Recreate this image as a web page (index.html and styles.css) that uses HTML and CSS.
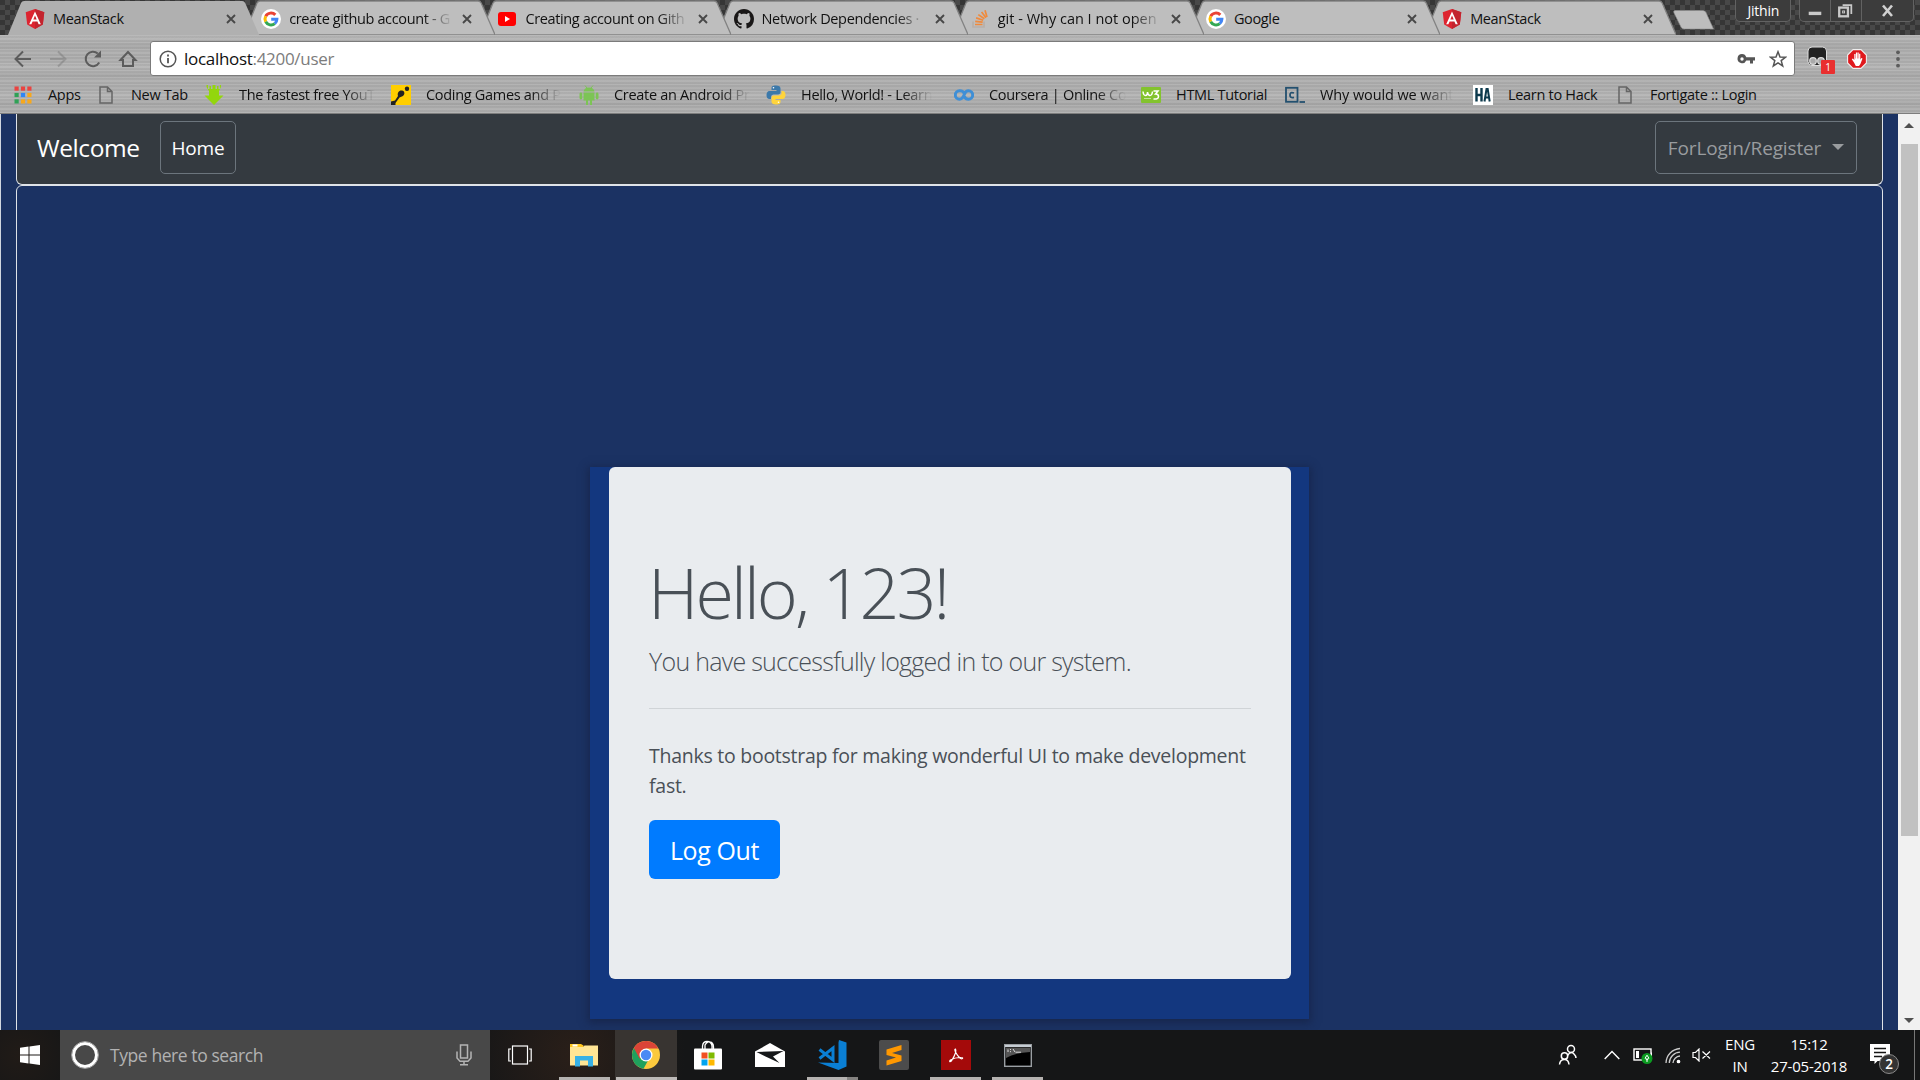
FILE: index.html
```html
<!DOCTYPE html>
<html lang="en">
<head>
<meta charset="utf-8">
<title>MeanStack</title>
<link rel="stylesheet" href="styles.css">
</head>
<body>
<svg class="defs" aria-hidden="true">
  <symbol id="tab" viewBox="0 0 251 35" preserveAspectRatio="none"><path d="M0 35 L13 3 Q14 1 16 1 H234 Q236 1 237 3 L251 35 Z"/></symbol>
  <symbol id="close" viewBox="0 0 10 10"><path d="M1 1 L9 9 M9 1 L1 9" stroke="#484848" stroke-width="1.9" fill="none"/></symbol>
  <symbol id="angular" viewBox="0 0 20 20"><path d="M10 0 L19.3 3.3 L17.8 15.6 L10 20 L2.200 15.600 L.7 3.300Z" fill="#dd2430"/><path d="M10 0 L19.300 3.300 L17.800 15.600 L10 20Z" fill="#c3242e"/><path d="M10 2.400 L4.200 15.300 H6.400 L7.600 12.400 H12.400 L13.600 15.300 H15.800Z M10 6.500 L11.700 10.600 H8.300Z" fill="#fff" fill-rule="evenodd"/></symbol>
  <symbol id="google" viewBox="0 0 20 20"><circle cx="10" cy="10" r="10" fill="#fff"/><g fill="none" stroke-width="3"><path d="M14.300 5.900 A6 6 0 0 0 4.700 7.200" stroke="#ea4335"/><path d="M4.700 7.200 A6 6 0 0 0 4.700 12.800" stroke="#fbbc05"/><path d="M4.700 12.800 A6 6 0 0 0 13.800 14.600" stroke="#34a853"/><path d="M13.800 14.600 A6 6 0 0 0 15.900 10.200 H10.200" stroke="#4285f4"/></g></symbol>
  <symbol id="page" viewBox="0 0 14 18"><path d="M1 1 H8.500 L13 5.500 V17 H1Z M8.500 1 V5.500 H13" fill="none" stroke="#666" stroke-width="1.500"/></symbol>
</svg>

<header class="browser">
  <div class="titlebar">
    <div class="tab active">
      <svg class="shape"><use href="#tab"/></svg>
      <svg class="fav"><use href="#angular"/></svg><span class="tab-title">MeanStack</span><svg class="x"><use href="#close"/></svg>
    </div>
    <div class="tab t2">
      <svg class="shape"><use href="#tab"/></svg>
      <svg class="fav"><use href="#google"/></svg><span class="tab-title fade">create github account - G</span><svg class="x"><use href="#close"/></svg>
    </div>
    <div class="tab t3">
      <svg class="shape"><use href="#tab"/></svg>
      <svg class="fav" viewBox="0 0 20 20"><rect x="1" y="3" width="18" height="14" rx="3" fill="#f00"/><path d="M8 7 L13 10 L8 13Z" fill="#fff"/></svg><span class="tab-title fade">Creating account on Gith</span><svg class="x"><use href="#close"/></svg>
    </div>
    <div class="tab t4">
      <svg class="shape"><use href="#tab"/></svg>
      <svg class="fav" viewBox="0 0 16 16"><path fill="#191717" d="M8 0C3.580 0 0 3.580 0 8c0 3.540 2.290 6.530 5.470 7.590.4.070.55-.17.55-.38 0-.19-.01-.82-.01-1.490-2.010.37-2.530-.49-2.690-.94-.09-.23-.48-.94-.82-1.130-.28-.15-.68-.52-.01-.53.63-.01 1.080.58 1.230.82.72 1.210 1.870.87 2.330.66.07-.52.28-.87.51-1.070-1.780-.2-3.640-.89-3.640-3.950 0-.87.31-1.590.82-2.150-.08-.2-.36-1.020.08-2.120 0 0 .67-.21 2.200.82.64-.18 1.320-.27 2-.27s1.360.09 2 .27c1.530-1.040 2.200-.82 2.200-.82.44 1.100.16 1.920.08 2.120.51.56.82 1.270.82 2.150 0 3.070-1.870 3.750-3.650 3.950.29.25.54.73.54 1.480 0 1.070-.01 1.930-.01 2.200 0 .21.15.46.55.38A8.010 8.010 0 0 0 16 8c0-4.420-3.580-8-8-8z"/></svg><span class="tab-title fade">Network Dependencies ·</span><svg class="x"><use href="#close"/></svg>
    </div>
    <div class="tab t5">
      <svg class="shape"><use href="#tab"/></svg>
      <svg class="fav" viewBox="0 0 20 20" fill="none" stroke-width="1.700"><path d="M3 12.500 V18 H14 V12.500" stroke="#b8b0aa"/><path d="M5 15.500 H12.500 M5.200 12.300 L12.700 13.200 M6.100 8.900 L13.200 11.200 M8.300 5.600 L14.400 9.800 M11.600 3 L16 8.800 M15 1.200 L17 8" stroke="#f08a3c"/></svg><span class="tab-title fade wider">git - Why can I not open</span><svg class="x"><use href="#close"/></svg>
    </div>
    <div class="tab t6">
      <svg class="shape"><use href="#tab"/></svg>
      <svg class="fav"><use href="#google"/></svg><span class="tab-title">Google</span><svg class="x"><use href="#close"/></svg>
    </div>
    <div class="tab t7">
      <svg class="shape"><use href="#tab"/></svg>
      <svg class="fav"><use href="#angular"/></svg><span class="tab-title">MeanStack</span><svg class="x"><use href="#close"/></svg>
    </div>
    <svg class="newtab" viewBox="0 0 42 20"><path d="M2 .5 H30 Q32 .5 33 2.500 L40.500 19 H11 Q9 19 8 17 L1 3 Q0 .5 2 .5Z" fill="#bdbdbd" stroke="#8d8d8d" stroke-width=".6"/></svg>
    <span class="profile">Jithin</span>
    <div class="winbtns">
      <svg class="wb" viewBox="0 0 31 21"><path d="M9 13.500 H22" stroke="#c9c9c9" stroke-width="3.500"/></svg>
      <svg class="wb" viewBox="0 0 31 21" fill="none" stroke="#c9c9c9"><path d="M12 5 H21 V14" stroke-width="1.800"/><rect x="8.500" y="7.500" width="9" height="9" stroke-width="2.400"/><rect x="12" y="11" width="2" height="2" stroke-width="1"/></svg>
      <svg class="wb wide" viewBox="0 0 51 21"><path d="M21 5.500 L30 16 M30 5.500 L21 16" stroke="#d0d0d0" stroke-width="2.600"/></svg>
    </div>
  </div>

  <div class="toolbar">
    <svg class="nav" viewBox="0 0 20 20"><path d="M18 10 H3 M10 2.500 L2.500 10 L10 17.500" /></svg>
    <svg class="nav off" viewBox="0 0 20 20"><path d="M2 10 H17 M10 2.500 L17.500 10 L10 17.500"/></svg>
    <svg class="nav" viewBox="0 0 20 20"><path d="M16.200 13.500 A7.200 7.200 0 1 1 14.800 4.600"/><path d="M18 1.500 V8.500 H11Z" fill="#5c5c5c" stroke="none"/></svg>
    <svg class="nav" viewBox="0 0 20 20"><path d="M2.500 11 L10 3 L17.500 11 H15 V17 H5 V11Z"/></svg>
    <div class="omnibox">
      <svg class="info" viewBox="0 0 18 18"><circle cx="9" cy="9" r="7.800" fill="none" stroke="#555" stroke-width="1.500"/><path d="M9 8 V13.200 M9 4.600 V6.400" stroke="#555" stroke-width="1.800"/></svg>
      <span class="url">localhost<span class="path">:4200/user</span></span>
      <svg class="key" viewBox="0 0 18 12"><path d="M5 1 A4.600 4.600 0 1 0 9.300 7.500 H13 V10.500 H16 V7.500 H18 V4.300 H9.300 A4.600 4.600 0 0 0 5 1Z M5 4.300 A1.700 1.700 0 1 1 5 7.700 A1.700 1.700 0 1 1 5 4.300Z" fill="#555" fill-rule="evenodd"/></svg>
      <svg class="star" viewBox="0 0 18 18"><path d="M9 1.800 L11 7 L16.600 7.200 L12.200 10.600 L13.700 16 L9 12.900 L4.300 16 L5.800 10.600 L1.400 7.200 L7 7Z" fill="none" stroke="#555" stroke-width="1.500"/></svg>
    </div>
    <svg class="ext" viewBox="0 0 28 30"><rect x="1" y="1" width="18.500" height="18.500" rx="4" fill="#222" stroke="#ddd"/><circle cx="6" cy="15" r="3.300" fill="#aaa" stroke="#ddd" stroke-width="1.200"/><circle cx="14" cy="15" r="3.300" fill="#aaa" stroke="#ddd" stroke-width="1.200"/><rect x="14" y="14" width="14" height="14" rx="1" fill="#e92f2f"/><text class="extnum" x="21" y="25" text-anchor="middle">1</text></svg>
    <svg class="adb" viewBox="0 0 20 20"><path d="M6 .6 H14 L19.400 6 V14 L14 19.400 H6 L.6 14 V6Z" fill="#e0181c" stroke="#eee" stroke-width="1.100"/><path d="M7 13.500 L4.800 10.300 L5.900 9.600 L7.300 11 V5 H8.500 V9.500 H8.900 V3.600 H10.100 V9.500 H10.500 V3.600 H11.700 V9.500 H12.100 V4.800 H13.300 V10.800 L14.300 9 L15.500 9.400 L13.400 15 L12 17 H8.800Z" fill="#fff"/></svg>
    <svg class="menu" viewBox="0 0 4 18"><circle cx="2" cy="2.300" r="1.900"/><circle cx="2" cy="9" r="1.900"/><circle cx="2" cy="15.700" r="1.900"/></svg>
  </div>

  <div class="bookmarks">
    <a class="bm"><svg class="bi" viewBox="0 0 20 20"><g fill="#ea4340"><rect x="1.500" y="1.500" width="4.200" height="4.200"/><rect x="7.900" y="1.500" width="4.200" height="4.200"/><rect x="14.300" y="1.500" width="4.200" height="4.200"/></g><rect x="1.500" y="7.900" width="4.200" height="4.200" fill="#2fa156"/><rect x="7.900" y="7.900" width="4.200" height="4.200" fill="#2f86f6"/><rect x="14.300" y="7.900" width="4.200" height="4.200" fill="#f7a81b"/><rect x="1.500" y="14.300" width="4.200" height="4.200" fill="#2fa156"/><rect x="7.900" y="14.300" width="4.200" height="4.200" fill="#f7a81b"/><rect x="14.300" y="14.300" width="4.200" height="4.200" fill="#f7a81b"/></svg><span>Apps</span></a>
    <a class="bm"><svg class="bi page"><use href="#page"/></svg><span>New Tab</span></a>
    <a class="bm"><svg class="bi" viewBox="0 0 20 20"><path d="M2.500 0 H4 V4 H5.500 V1 H7 V4 H8.500 V0 H11.500 V4 H13 V1 H14.500 V4 H16 V0 H17 V2 L15 6 V10.500 H19.500 L10 20 L.5 10.500 H5 V6 L2.500 2Z" fill="#93d60c"/></svg><span class="fade">The fastest free YouT</span></a>
    <a class="bm"><svg class="bi" viewBox="0 0 20 20"><rect width="20" height="20" fill="#ffce00"/><path d="M0 20 V16.500 L4 15.500 L7 11 C6 8 8 5 11 5.500 C14 6 14 9.500 12 11 L8.500 12.500 L4.500 18 V20Z" fill="#222"/><circle cx="16" cy="3.800" r="2.200" fill="#222"/></svg><span class="fade">Coding Games and P</span></a>
    <a class="bm"><svg class="bi" viewBox="0 0 20 20" fill="#7cc455"><path d="M4.500 6.500 A5.600 5 0 0 1 15.500 6.500Z M4.500 7.500 H15.500 V15.500 H13 V20 H11 V15.500 H9 V20 H7 V15.500 H4.500Z"/><rect x=".5" y="7.500" width="2.800" height="7" rx="1.400"/><rect x="16.700" y="7.500" width="2.800" height="7" rx="1.400"/><path d="M6 .5 L8 3 M14 .5 L12 3" stroke="#7cc455"/></svg><span class="fade">Create an Android Pr</span></a>
    <a class="bm"><svg class="bi" viewBox="0 0 20 20"><path d="M10 .5 C6 .5 5.500 1.800 5.500 3.500 V5 H10.500 V6 H3.500 C1.500 6 .5 8 .5 10 C.5 12.500 1.500 14 3.500 14 H5 V12 C5 10.500 6.300 9.500 7.500 9.500 H12 C13.500 9.500 14.500 8.500 14.500 7 V3.500 C14.500 1.500 13 .5 10 .5Z" fill="#3c79aa"/><path d="M10 19.500 C14 19.500 14.500 18.200 14.500 16.500 V15 H9.500 V14 H16.500 C18.500 14 19.500 12 19.500 10 C19.500 7.500 18.500 6 16.500 6 H15.500 V8 C15.500 9.500 14.200 10.500 12.800 10.500 H8 C6.500 10.500 5.500 11.500 5.500 13 V16.500 C5.500 18.500 7 19.500 10 19.500Z" fill="#ffd43b"/><circle cx="7.500" cy="2.800" r=".8" fill="#fff"/><circle cx="12.500" cy="17.200" r=".8" fill="#fff"/></svg><span class="fade">Hello, World! - Learn</span></a>
    <a class="bm"><svg class="bi" viewBox="0 0 20 20"><path d="M10 8 C8.500 5.500 6.500 5.800 5.500 5.800 A4.200 4.200 0 0 0 5.500 14.200 C8.500 14.200 9.500 11.500 10.500 9 C11.500 6.500 13 5.800 14.500 5.800 A4.200 4.200 0 0 1 14.500 14.200 C12.500 14.200 11 13 10.300 11.500" fill="none" stroke="#3f8fd6" stroke-width="3"/></svg><span class="fade">Coursera | Online Co</span></a>
    <a class="bm"><svg class="bi" viewBox="0 0 20 20"><rect y="2" width="20" height="16" rx="1" fill="#83c32e"/><path d="M2 6.500 Q2.500 10.500 4.500 10.500 Q6.500 10.500 6.500 7 Q7 10.500 9 10.500 Q11 10.500 11.500 6.500 M12.500 6 H17 L14.500 9 Q17.500 9 17.500 11.500 Q17.500 14.500 12.500 14" fill="none" stroke="#fff" stroke-width="1.500"/><path d="M3 13.500 H10" stroke="#c3e29c"/></svg><span>HTML Tutorial</span></a>
    <a class="bm"><svg class="bi" viewBox="0 0 20 20" fill="none" stroke="#23506f"><rect x="1" y="2.800" width="11.500" height="14" stroke-width="1.800"/><path d="M9 8 Q5 6.500 5 10 Q5 13.500 9 12.300" stroke-width="1.800"/><path d="M14.500 17 H20" stroke-width="1.800"/></svg><span class="fade wider">Why would we want</span></a>
    <a class="bm"><svg class="bi" viewBox="0 0 20 20"><rect width="20" height="20" fill="#fff"/><path d="M3.500 3 V16.500 M8.500 3 V16.500 M3.500 10 H8.500" stroke="#0d3a4d" stroke-width="2.400"/><path d="M11.500 16.500 L13.500 4 H14.700 L16.700 16.500 M12.500 12.500 H15.700" stroke="#0d3a4d" stroke-width="2" fill="none"/></svg><span>Learn to Hack</span></a>
    <a class="bm"><svg class="bi page"><use href="#page"/></svg><span>Fortigate :: Login</span></a>
  </div>
</header>

<div class="viewport">
  <main class="page-body">
    <nav class="navbar">
      <span class="brand">Welcome</span>
      <a class="btn-nav home">Home</a>
      <a class="btn-nav login">ForLogin/Register<i class="caret"></i></a>
    </nav>
    <section class="stage">
      <div class="panel">
        <div class="jumbotron">
          <h1>Hello, 123!</h1>
          <p class="lead">You have successfully logged in to our system.</p>
          <hr>
          <p class="thanks">Thanks to bootstrap for making wonderful UI to make development fast.</p>
          <a class="logout"><span>Log Out</span></a>
        </div>
      </div>
    </section>
  </main>
  <div class="scrollbar">
    <i class="up"></i><i class="thumb"></i><i class="down"></i>
  </div>
</div>

<footer class="taskbar">
  <div class="start"><svg viewBox="0 0 20 20" width="20" height="20" fill="#fff"><path d="M0 2.800 L8.500 1.600 V9.500 H0Z M9.500 1.400 L20 0 V9.500 H9.500Z M0 10.500 H8.500 V18.400 L0 17.200Z M9.500 10.500 H20 V20 L9.500 18.600Z"/></svg></div>
  <div class="search">
    <svg class="cortana" viewBox="0 0 28 28"><circle cx="14" cy="14" r="11.500" fill="none" stroke="#fff" stroke-width="3"/><circle cx="14" cy="14" r="13.400" fill="none" stroke="#aaa" stroke-width="1"/></svg>
    <span>Type here to search</span>
    <svg class="mic" viewBox="0 0 16 22" fill="none" stroke="#b4b4b4" stroke-width="1.500"><rect x="4.500" y="1" width="7" height="13"/><path d="M1 7.500 V14 L4 17.200 H12 L15 14 V7.500 M8 17.200 V20.500 M4 20.700 H12"/></svg>
  </div>
  <div class="app taskview"><svg viewBox="0 0 24 20" width="24" height="20" fill="none" stroke="#fff" stroke-width="1.200"><rect x="4.500" y="1" width="15" height="18"/><path d="M3 4 H.8 V16 H3 M21 4 H23.200 V16 H21"/></svg></div>
  <div class="app open"><svg viewBox="0 0 28 24" width="28" height="24"><path d="M0 1 H11 L13.500 2.500 V5 H0Z" fill="#ffc61e"/><rect x="2.500" y="1.500" width="5" height="2" fill="#fff"/><path d="M0 4 H13 L14.500 2.500 H28 V22.500 H0Z" fill="#ffe594"/><path d="M5 23.500 V13 H23 V23.500 H18 V17.500 H10 V23.500Z" fill="#37b1e6"/></svg></div>
  <div class="app open current"><svg viewBox="0 0 28 28" width="28" height="28"><circle cx="14" cy="14" r="14" fill="#fbc93d"/><path d="M14 14 L1.900 7 A14 14 0 0 0 11.500 27.800 L18 16Z" fill="#1fa15d"/><path d="M14 14 L7.500 17.500 L1.900 7 A14 14 0 0 1 26.400 7.600 H14Z" fill="#db4437"/><circle cx="14" cy="14" r="6.500" fill="#fff"/><circle cx="14" cy="14" r="5.200" fill="#4a8af4"/></svg></div>
  <div class="app"><svg viewBox="0 0 30 30" width="30" height="30"><path d="M9.500 9 V6 Q10 1.500 14 1.500 Q18.500 1.500 19 6 V9 M12 9 V5 Q13 3 15 2 M16 2 Q20.500 2 20.500 7 V9" fill="none" stroke="#fff" stroke-width="1.300"/><rect x="1" y="8.500" width="28" height="21" rx="1" fill="#fff"/><rect x="8.500" y="12.500" width="6" height="6" fill="#f25022"/><rect x="15.500" y="12.500" width="6" height="6" fill="#7fba00"/><rect x="8.500" y="19.500" width="6" height="6" fill="#00a4ef"/><rect x="15.500" y="19.500" width="6" height="6" fill="#ffb900"/></svg></div>
  <div class="app mail"><svg viewBox="0 0 30 24" width="30" height="24"><path d="M0 8.500 L15 0 L30 8.500 V24 H0Z" fill="#fff"/><path d="M1.500 9 L28.500 8 L18 13.500 L24.500 20 L10.500 13.500Z" fill="#151719"/></svg></div>
  <div class="app open stacked"><svg viewBox="0 0 30 30" width="30" height="30"><path d="M21.500 2.500 V23 L1 22.500 L21.500 30 L29.500 26.500 V2.500 L22 0Z" fill="#0a7fd4"/><path d="M2.500 9.500 L16 20 V8 L2.500 18.500" fill="none" stroke="#0a7fd4" stroke-width="3"/></svg></div>
  <div class="app"><svg viewBox="0 0 30 30" width="30" height="30"><rect width="30" height="30" rx="2" fill="#4c4c4c"/><path d="M22.500 5 V10 L13 13 L22.500 15.500 V21 L7.500 25.500 V20.500 L17 17.500 L7.500 15 V9.500Z" fill="#ff9800"/></svg></div>
  <div class="app open"><svg viewBox="0 0 30 30" width="30" height="30"><rect width="30" height="30" fill="#a40a0a"/><path d="M14.500 9 C12.500 9 15.500 15 19.500 18.500 C22 19.500 22.500 17.500 20 17.500 C15.500 17.300 12 18.500 9.500 20 C7.500 22 9.800 22.500 11 20 C13.500 16 15.500 11 14.500 9Z" fill="none" stroke="#fff" stroke-width="1.200"/></svg></div>
  <div class="app open"><svg viewBox="0 0 28 23" width="28" height="23"><rect x=".7" y=".7" width="26.600" height="21.600" fill="#000" stroke="#9a9fa3" stroke-width="1.400"/><rect x="1" y="1" width="26" height="2" fill="#c5ccd3"/><path d="M2 3.500 H26 V8 Q10 9 2 14Z" fill="#555"/><path d="M4 5.500 V8 M6.500 5 V6 M6.500 7.200 V8.200 M9 5 L11 8 M11.500 8.200 H17" stroke="#ddd" stroke-width="1"/></svg></div>

  <div class="tray">
    <svg class="people" viewBox="0 0 20 22" fill="none" stroke="#fff" stroke-width="1.500"><circle cx="13" cy="5" r="3.500"/><path d="M9.500 11.500 Q13 6.500 16 10 Q18 12 18 14"/><circle cx="6.500" cy="12" r="3.200"/><path d="M1.500 20.500 Q2 15.500 6.500 15.500 Q10.500 15.500 11 20.500"/></svg>
    <svg class="chev" viewBox="0 0 16 10"><path d="M.7 9 L8 1.500 L15.300 9" fill="none" stroke="#fff" stroke-width="1.400"/></svg>
    <svg class="batt" viewBox="0 0 20 18"><rect x="1" y="3" width="17" height="11" fill="none" stroke="#fff" stroke-width="1.400"/><path d="M18.500 6.500 V10.500" stroke="#fff"/><rect x="3" y="5" width="3" height="7" fill="#fff"/><circle cx="14" cy="12.500" r="5.500" fill="#0b9a21"/><path d="M14 9.200 L15.900 12.200 L14 14.200 L12.100 12.200Z M14 12 V16" fill="none" stroke="#fff" stroke-width="1"/></svg>
    <svg class="wifi" viewBox="0 0 16 17" fill="none" stroke="#ccc" stroke-width="1.300"><path d="M1 16 A15 15 0 0 1 15 1.500 M4.300 16 A11 11 0 0 1 15 5.200 M8 16 A7.500 7.500 0 0 1 15 9"/><circle cx="13.500" cy="14.500" r="1.200" fill="#fff" stroke="#fff"/></svg>
    <svg class="vol" viewBox="0 0 19 14" fill="none" stroke="#fff" stroke-width="1.200"><path d="M1 4.500 H3.500 L7 1 V13 L3.500 9.500 H1Z M10.500 3.500 L18 10.500 M18 3.500 L10.500 10.500"/></svg>
    <div class="lang"><span>ENG</span><span>IN</span></div>
    <div class="clock"><span>15:12</span><span class="date">27-05-2018</span></div>
    <div class="notif"><svg viewBox="0 0 20 20" width="20" height="20"><path d="M0 0 H20 V17 H7.500 L4.500 20 V17 H0Z" fill="#fff"/><path d="M4 4.500 H16 M4 8.500 H16 M4 12.500 H12" stroke="#151515" stroke-width="1.400"/></svg><b class="badge">2</b></div>
    <i class="peek"></i>
  </div>
</footer>
</body>
</html>
```
FILE: styles.css
```css
* { box-sizing: border-box; }
body {
  margin: 0;
  width: 1920px;
  height: 1080px;
  overflow: hidden;
  display: flex;
  flex-direction: column;
  font-family: "Open Sans", "Noto Sans", sans-serif;
  background: #1b3263;
}
.defs { position: absolute; width: 0; height: 0; }
svg { display: block; flex: none; }

/* Browser frame */
.browser {
  height: 114px;
  flex: none;
  border-bottom: 1px solid #7d7d7d;
  background:
    repeating-linear-gradient(180deg, rgba(255,255,255,.08) 0 1px, rgba(0,0,0,.03) 1px 3px, rgba(255,255,255,.04) 3px 5px, rgba(0,0,0,.04) 5px 7px),
    repeating-linear-gradient(180deg, #acacac 0, #b6b6b6 9px, #a8a8a8 17px, #b0b0b0 23px, #acacac 29px);
}
.titlebar {
  height: 35px;
  padding-left: 8px;
  display: flex;
  background-color: #3d3d3d;
  background-image: repeating-conic-gradient(#484848 0 25%, #363636 0 50%);
  background-size: 10px 10px;
}
.tab {
  position: relative;
  flex: none;
  width: 251.200px;
  margin-right: -15px;
  padding: 3px 23px 0 17px;
  display: flex;
  align-items: center;
  z-index: 1;
}
.shape { position: absolute; left: 0; top: 0; width: 100%; height: 35px; z-index: -1; fill: #bebebe; stroke: #828282; stroke-width: 1.300; }
.active .shape { fill: #b0b0b0; stroke: none; }
.active { z-index: 8; }
.t2 { z-index: 7; } .t3 { z-index: 6; } .t4 { z-index: 5; } .t5 { z-index: 4; } .t6 { z-index: 3; } .t7 { z-index: 2; }
.fav { width: 20px; height: 20px; }
.tab-title { margin: -2px 0 0 8px; width: 164px; white-space: nowrap; font-size: 14.500px; letter-spacing: -.36px; color: #111; }
.tab-title.wider { letter-spacing: 0; }
.fade { -webkit-mask-image: linear-gradient(90deg, #000 calc(100% - 30px), transparent); mask-image: linear-gradient(90deg, #000 calc(100% - 30px), transparent); }
.x { width: 10px; height: 10px; margin-left: 9px; }
.newtab { width: 42px; height: 20px; margin: 10px 0 0 12px; }
.profile { width: 56px; height: 22px; margin-left: 20px; border: 1px solid #626262; border-top: 0; border-radius: 0 0 5px 5px; text-align: center; color: #fff; font-size: 14px; line-height: 22px; letter-spacing: -.2px; background: #3c3c3c; }
.winbtns { display: flex; height: 22px; margin-left: 8px; border: 1px solid #626262; border-top: 0; border-radius: 0 0 5px 5px; background: #3c3c3c; }
.wb { width: 31px; height: 21px; border-right: 1px solid #626262; }
.wb.wide { width: 51px; border: 0; }

.toolbar { height: 47px; display: flex; align-items: center; padding: 0 0 0 13px; }
.nav { width: 20px; height: 20px; margin-right: 15px; fill: none; stroke: #5c5c5c; stroke-width: 2; }
.nav.off { opacity: .3; }
.nav:nth-child(4) { margin-right: 12px; }
.omnibox { width: 1645px; height: 35px; border: 1px solid #7b7b7b; border-radius: 3px; background: #fff; display: flex; align-items: center; padding: 0 7px 0 8px; }
.info { width: 18px; height: 18px; }
.url { margin-left: 7px; font-size: 17px; letter-spacing: -.3px; color: #111; flex: 1; }
.path { color: #7c7c7c; }
.key { width: 18px; height: 12px; }
.star { width: 18px; height: 18px; margin-left: 14px; }
.ext { width: 28px; height: 30px; margin: 4px 0 0 12px; }
.extnum { font-size: 10px; fill: #fff; }
.adb { width: 20px; height: 20px; margin-left: 12px; }
.menu { width: 4px; height: 18px; margin-left: 29px; fill: #5c5c5c; }

.bookmarks { height: 26px; padding: 0 0 0 13px; display: grid; grid-template-columns: 83px 108px 187px 188px 187px 188px 187px 144px 188px 142px 1fr; align-items: center; }
.bm { display: flex; align-items: center; font-size: 14.500px; letter-spacing: -.3px; color: #111; white-space: nowrap; }
.bi { width: 20px; height: 20px; margin-right: 15px; }
.bi.page { width: 14px; height: 18px; margin: 0 18px 0 3px; }
.bm span { margin-top: -1px; }
.bm span.wider { letter-spacing: -.1px; }

/* Page */
.viewport { height: 916px; display: flex; overflow: hidden; }
.page-body { width: 1898px; padding: 0 15px; border-left: 1px solid #d0d6df; overflow: hidden; }
.navbar { height: 71px; background: #343a40; border: 1px solid #dfe3e8; border-top: 0; border-radius: 0 0 6px 6px; display: flex; align-items: center; padding: 0 25px 3px 20px; }
.brand { font-size: 24.500px; letter-spacing: -.4px; color: #fff; width: 123px; white-space: nowrap; }
.btn-nav { height: 53px; border: 1px solid #6c757d; border-radius: 5px; display: flex; align-items: center; justify-content: center; font-size: 19px; letter-spacing: -.15px; white-space: nowrap; }
.home { width: 76px; color: #fff; }
.login { width: 202px; margin-left: auto; color: #999c9f; }
.caret { border: 6px solid transparent; border-top-color: #999c9f; border-bottom: 0; margin-left: 11px; margin-top: -2px; }
.stage { height: 960px; border: 1px solid #dfe3e8; border-radius: 6px; display: flex; justify-content: center; align-items: flex-start; padding-top: 281px; }
.panel { width: 719px; height: 552px; background: #13377f; padding: 0 18px 0 19px; box-shadow: 0 2px 8px 2px rgba(20,30,60,.55); }
.jumbotron { height: 512px; background: #e9ecef; border-radius: 6px; padding: 83px 40px 0; color: #495057; }
h1 { margin: 0 0 8.500px; font-size: 70px; line-height: 84px; font-weight: 300; letter-spacing: -2.900px; white-space: nowrap; text-indent: -1px; }
.lead { margin: 0; font-size: 25px; line-height: 37.500px; font-weight: 300; letter-spacing: -.74px; white-space: nowrap; }
hr { margin: 28px 0 32px; border: 0; border-top: 1px solid #d0d4d7; }
.thanks { margin: 0 0 19px; font-size: 19.500px; line-height: 30px; letter-spacing: -.26px; }
.logout { width: 131px; height: 59px; border-radius: 6px; background: #007bff; color: #fff; display: flex; align-items: center; justify-content: center; font-size: 25px; letter-spacing: -.4px; }

.scrollbar { width: 22px; background: #f1f1f1; display: flex; flex-direction: column; align-items: center; padding: 9px 0 7px; }
.up, .down { border: 5px solid transparent; }
.up { border-bottom-color: #505050; border-top: 0; }
.down { border-top-color: #505050; border-bottom: 0; margin-top: auto; }
.thumb { width: 17px; height: 692px; margin-top: 16px; background: #c1c1c1; }

/* Taskbar */
.taskbar { height: 50px; flex: none; display: flex; background: radial-gradient(circle at 575px 25px, #2a1f19 0, transparent 110px), radial-gradient(circle at 20px 25px, #211b17 0, transparent 60px), #151617; }
.start { width: 60px; display: flex; align-items: center; justify-content: center; }
.search { width: 430px; background: #484848; display: flex; align-items: center; padding: 0 18px 0 11px; color: #b2b2b2; font-size: 17.500px; letter-spacing: -.42px; }
.cortana { width: 28px; height: 28px; margin-right: 11px; }
.mic { width: 16px; height: 22px; margin-left: auto; }
.app { width: 61.900px; display: flex; align-items: center; justify-content: center; }
.app.taskview { width: 63.500px; padding-right: 3.500px; }
.app.open { background: linear-gradient(#b5b2b0, #b5b2b0) center bottom / 51px 3px no-repeat; }
.app.current { background: linear-gradient(#bdbab8, #bdbab8) center bottom / 61px 3px no-repeat #383431; }
.app.stacked { background: linear-gradient(90deg, #b5b2b0 40px, #858381 40px) center bottom / 51px 3px no-repeat; }
.mail svg { margin-top: -1px; }
.tray { flex: 1; display: flex; align-items: center; justify-content: flex-end; color: #fff; font-size: 15px; letter-spacing: -.2px; }
.people { width: 20px; height: 22px; margin-right: 26px; }
.chev { width: 16px; height: 10px; margin-right: 13px; }
.batt { width: 20px; height: 18px; margin-right: 12px; }
.wifi { width: 16px; height: 17px; margin-right: 11px; }
.vol { width: 19px; height: 14px; }
.lang, .clock { display: flex; flex-direction: column; align-items: center; line-height: 22px; }
.lang { width: 58px; }
.clock { width: 80px; }
.notif { width: 63px; position: relative; padding-left: 21px; height: 50px; padding-top: 14px; }
.badge { position: absolute; left: 30px; top: 24px; width: 20px; height: 20px; border: 1px solid #8a8a8a; border-radius: 50%; background: #333; font-size: 13.500px; font-weight: 600; line-height: 18px; text-align: center; }
.peek { width: 1px; height: 50px; background: #777; margin-right: 5px; margin-left: 2px; }
```
